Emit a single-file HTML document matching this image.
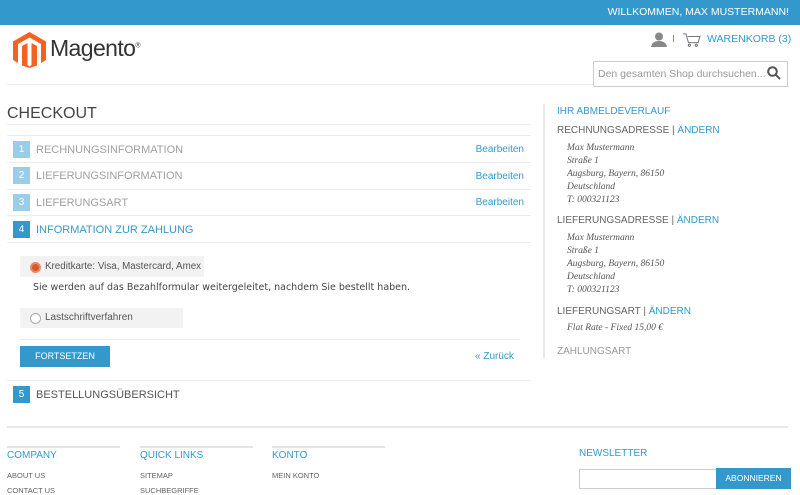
<!DOCTYPE html>
<html><head><meta charset="utf-8"><style>
*{margin:0;padding:0;box-sizing:border-box}
body{width:800px;height:493px;overflow:hidden;background:#fff;font-family:"Liberation Sans",sans-serif;position:relative;color:#636363}
.a{position:absolute;white-space:nowrap}
.hl{position:absolute;height:1px;background:#ececec}
.num{position:absolute;left:13px;width:17px;height:17px;color:#fff;font-size:10px;text-align:center;line-height:17px;background:#9bcde6}
.st{position:absolute;left:36px;font-size:11px;color:#a0a0a0;line-height:14px}
.bb{position:absolute;right:276px;font-size:10px;color:#3399cc}
.blue{color:#3399cc}
.ad{position:absolute;left:567px;font-family:"Liberation Serif",serif;font-style:italic;font-size:9.5px;color:#555;line-height:13px}
.sh{position:absolute;left:557px;font-size:10px;color:#636363}
.fh{position:absolute;font-size:10px;color:#3399cc}
.fl{position:absolute;font-size:7.5px;color:#636363}
.fline{position:absolute;top:446px;height:2px;width:113px;background:#e5e5e5}
</style></head><body>
<div class="a" style="left:0;top:0;width:800px;height:25px;background:#3399cc"></div>
<div class="a" style="right:11px;top:6px;font-size:10.5px;color:#fff">WILLKOMMEN, MAX MUSTERMANN!</div>
<svg class="a" style="left:13px;top:32px" width="33" height="36" viewBox="0 0 33 36"><path d="M16.5 0L33 9.5V28L28 31V12L16.5 5.5 5 12V31L0 28V9.5Z" fill="#f26322"/><path d="M9 14L14.5 11V33L16.5 34.5 18.5 33V11L24 14V33.5L16.5 36 9 33.5Z" fill="#f26322"/></svg>
<div class="a" style="left:50px;top:35px;font-size:23px;color:#333;letter-spacing:-0.6px">Magento<sup style="font-size:7px">®</sup></div>
<svg class="a" style="left:651px;top:32px" width="16" height="15" viewBox="0 0 16 15"><circle cx="8" cy="4.5" r="4" fill="#888"/><path d="M0 15Q1 9 8 9T16 15Z" fill="#888"/></svg>
<div class="a" style="left:673px;top:35px;width:1px;height:7px;background:#e67"></div>
<svg class="a" style="left:683px;top:33px" width="18" height="14" viewBox="0 0 20 16" fill="none" stroke="#777" stroke-width="1.2"><path d="M0 1H3L6 11H17L19 4H5"/><circle cx="7" cy="14" r="1.2"/><circle cx="15" cy="14" r="1.2"/></svg>
<div class="a blue" style="left:707px;top:33px;font-size:10.5px">WARENKORB (3)</div>
<div class="hl" style="left:7px;top:84px;width:586px"></div>
<div class="a" style="left:593px;top:61px;width:195px;height:26px;border:1px solid #ccc"></div>
<div class="a" style="left:598px;top:68px;font-size:10.5px;color:#999">Den gesamten Shop durchsuchen...</div>
<svg class="a" style="left:767px;top:66px" width="14" height="14" viewBox="0 0 14 14" fill="none" stroke="#555" stroke-width="2"><circle cx="5.5" cy="5.5" r="4.3"/><path d="M8.5 8.5L13 13"/></svg>
<div class="a" style="left:7px;top:105px;font-size:16px;color:#444">CHECKOUT</div>
<div class="hl" style="left:7px;top:124px;width:524px"></div>
<div class="hl" style="left:7px;top:135px;width:524px"></div>
<div class="num" style="top:141px">1</div><div class="st" style="top:143px">RECHNUNGSINFORMATION</div><div class="bb" style="top:144px">Bearbeiten</div>
<div class="hl" style="left:7px;top:162px;width:524px"></div>
<div class="num" style="top:167px">2</div><div class="st" style="top:169px">LIEFERUNGSINFORMATION</div><div class="bb" style="top:171px">Bearbeiten</div>
<div class="hl" style="left:7px;top:189px;width:524px"></div>
<div class="num" style="top:194px">3</div><div class="st" style="top:196px">LIEFERUNGSART</div><div class="bb" style="top:197px">Bearbeiten</div>
<div class="hl" style="left:7px;top:215px;width:524px"></div>
<div class="num" style="top:221px;background:#3399cc">4</div><div class="st blue" style="top:223px">INFORMATION ZUR ZAHLUNG</div>
<div class="hl" style="left:7px;top:242px;width:524px"></div>
<div class="a" style="left:20px;top:256px;width:184px;height:21px;background:#f2f2f2"></div>
<div class="a" style="left:30px;top:262px;width:11px;height:11px;border-radius:50%;background:#d35a2a;border:2px solid #e98a5f"></div>
<div class="a" style="left:45px;top:261px;font-size:9.8px;color:#555">Kreditkarte: Visa, Mastercard, Amex</div>
<div class="a" style="left:33px;top:282px;font-family:'DejaVu Sans',sans-serif;font-size:9.5px;color:#444">Sie werden auf das Bezahlformular weitergeleitet, nachdem Sie bestellt haben.</div>
<div class="a" style="left:20px;top:308px;width:163px;height:20px;background:#f2f2f2"></div>
<div class="a" style="left:30px;top:313px;width:11px;height:11px;border-radius:50%;background:#fff;border:1px solid #aaa"></div>
<div class="a" style="left:45px;top:312px;font-size:10px;color:#555">Lastschriftverfahren</div>
<div class="hl" style="left:20px;top:339px;width:500px"></div>
<div class="a" style="left:20px;top:346px;width:90px;height:21px;background:#3399cc;color:#fff;font-size:9px;text-align:center;line-height:21px">FORTSETZEN</div>
<div class="a blue" style="left:475px;top:351px;font-size:10px">« Zurück</div>
<div class="hl" style="left:7px;top:380px;width:524px"></div>
<div class="num" style="top:386px;background:#3399cc">5</div><div class="st" style="top:388px;color:#555">BESTELLUNGSÜBERSICHT</div>
<div class="a" style="left:543px;top:104px;width:2px;height:254px;background:#e8e8e8"></div>
<div class="a blue" style="left:557px;top:106px;font-size:10px">IHR ABMELDEVERLAUF</div>
<div class="sh" style="top:125px">RECHNUNGSADRESSE | <span class="blue">ÄNDERN</span></div>
<div class="ad" style="top:142px">Max Mustermann<br>Straße 1<br>Augsburg, Bayern, 86150<br>Deutschland<br>T: 000321123</div>
<div class="sh" style="top:215px">LIEFERUNGSADRESSE | <span class="blue">ÄNDERN</span></div>
<div class="ad" style="top:232px">Max Mustermann<br>Straße 1<br>Augsburg, Bayern, 86150<br>Deutschland<br>T: 000321123</div>
<div class="sh" style="top:306px">LIEFERUNGSART | <span class="blue">ÄNDERN</span></div>
<div class="ad" style="top:322px">Flat Rate - Fixed 15,00 €</div>
<div class="sh" style="top:346px;color:#999">ZAHLUNGSART</div>
<div class="a" style="left:7px;top:426px;width:781px;height:2px;background:#e8e8e8"></div>
<div class="fline" style="left:7px"></div><div class="fline" style="left:140px"></div><div class="fline" style="left:272px"></div>
<div class="fh" style="left:7px;top:450px">COMPANY</div>
<div class="fh" style="left:140px;top:450px">QUICK LINKS</div>
<div class="fh" style="left:272px;top:450px">KONTO</div>
<div class="fl" style="left:7px;top:471px">ABOUT US</div>
<div class="fl" style="left:7px;top:486px">CONTACT US</div>
<div class="fl" style="left:140px;top:471px">SITEMAP</div>
<div class="fl" style="left:140px;top:486px">SUCHBEGRIFFE</div>
<div class="fl" style="left:272px;top:471px">MEIN KONTO</div>
<div class="fh" style="left:579px;top:448px">NEWSLETTER</div>
<div class="a" style="left:579px;top:469px;width:138px;height:20px;border:1px solid #ccc"></div>
<div class="a" style="left:716px;top:468px;width:75px;height:21px;background:#3399cc;color:#fff;font-size:8.5px;text-align:center;line-height:21px">ABONNIEREN</div>
</body></html>
